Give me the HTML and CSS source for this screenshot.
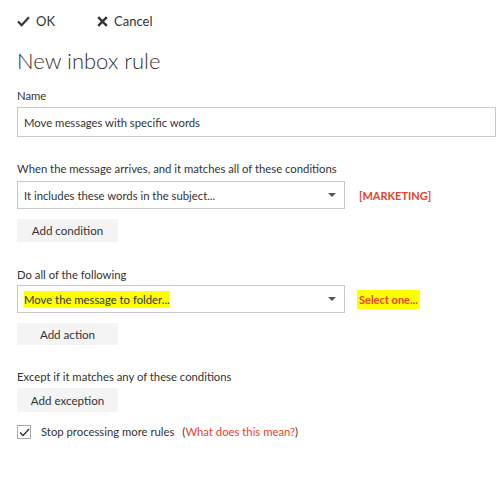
FILE: index.html
```html
<!DOCTYPE html>
<html>
<head>
<meta charset="utf-8">
<link rel="stylesheet" href="styles.css">
</head>
<body>
<div class="page">
  <div class="toolbar">
    <span class="tool">
      <svg class="ico" width="13" height="11" viewBox="0 0 13 11"><path d="M1 5.5 L4.6 9.2 L12 1.2" fill="none" stroke="#333" stroke-width="2.2"/></svg>
      <span>OK</span>
    </span>
    <span class="tool">
      <svg class="ico" width="11" height="11" viewBox="0 0 11 11"><path d="M1.2 1.2 L9.8 9.8 M9.8 1.2 L1.2 9.8" fill="none" stroke="#333" stroke-width="2.4"/></svg>
      <span>Cancel</span>
    </span>
  </div>
  <h1 class="title">New inbox rule</h1>

  <div class="label label-name">Name</div>
  <div class="input">Move messages with specific words</div>

  <div class="label label-when">When the message arrives, and it matches all of these conditions</div>
  <div class="select-row">
    <div class="select"><span>It includes these words in the subject...</span><span class="arrow"></span></div>
    <span class="note red">[MARKETING]</span>
  </div>
  <button class="btn btn-cond">Add condition</button>

  <div class="label label-do">Do all of the following</div>
  <div class="select-row row-do">
    <div class="select"><span class="hl">Move the message to folder...</span><span class="arrow"></span></div>
    <span class="note red hl hl-note">Select one...</span>
  </div>
  <button class="btn btn-action">Add action</button>

  <div class="label label-except">Except if it matches any of these conditions</div>
  <button class="btn btn-exc">Add exception</button>

  <div class="check-row">
    <span class="checkbox"><svg width="11" height="9" viewBox="0 0 11 9"><path d="M1 4.5 L4 7.5 L10 1" fill="none" stroke="#333" stroke-width="1.4"/></svg></span>
    <span class="check-text">Stop processing more rules</span>
    <span class="help">(<span class="red">What does this mean?</span>)</span>
  </div>
</div>
</body>
</html>
```

FILE: styles.css
```css
html, body {
  margin: 0;
  padding: 0;
  background: #fff;
}
body {
  font-family: "Lato", "Open Sans", sans-serif;
  font-size: 11.3px;
  color: #333;
}
.page {
  padding: 12px 4px 0 17px;
}
.toolbar {
  display: flex;
  align-items: center;
  height: 18px;
  font-size: 13px;
}
.tool {
  display: inline-flex;
  align-items: center;
  gap: 6px;
}
.tool + .tool {
  margin-left: 42px;
}
.ico {
  display: block;
}
.title {
  margin: 16px 0 0 0;
  font-size: 22px;
  line-height: 30px;
  font-weight: 300;
  color: #333;
}
.label {
  line-height: 16px;
}
.label-name { margin-top: 12px; }
.label-when { margin-top: 24px; }
.label-do { margin-top: 25px; }
.label-except { margin-top: 24px; }
.input {
  box-sizing: border-box;
  margin-top: 3px;
  height: 30px;
  width: 479px;
  border: 1px solid #c8c8c8;
  padding: 0 6px;
  display: flex;
  align-items: center;
}
.select-row {
  display: flex;
  align-items: center;
  margin-top: 4px;
  gap: 14px;
}
.row-do {
  margin-top: 2px;
  gap: 12px;
}
.select {
  box-sizing: border-box;
  width: 328px;
  height: 28px;
  border: 1px solid #c8c8c8;
  padding: 0 8px 0 6px;
  display: flex;
  align-items: center;
  justify-content: space-between;
}
.arrow {
  width: 0;
  height: 0;
  border-left: 4px solid transparent;
  border-right: 4px solid transparent;
  border-top: 4px solid #555;
}
.red {
  color: #e8412c;
}
.note {
  font-weight: bold;
  font-size: 11px;
}
.hl {
  background: #ffff00;
  padding: 2px 0;
}
.hl-note {
  padding: 3px 2px;
}
.btn {
  display: block;
  box-sizing: border-box;
  width: 101px;
  border: none;
  background: #f4f4f4;
  font-family: inherit;
  font-size: 11.6px;
  color: #333;
  padding: 0;
}
.btn-cond { margin-top: 10px; height: 23px; }
.btn-action { margin-top: 10px; height: 22px; }
.btn-exc { margin-top: 3px; height: 24px; }
.check-row {
  display: flex;
  align-items: center;
  margin-top: 12px;
  line-height: 16px;
}
.checkbox {
  box-sizing: border-box;
  width: 14px;
  height: 14px;
  border: 1px solid #aaa;
  display: inline-flex;
  align-items: center;
  justify-content: center;
  margin-right: 10px;
}
.checkbox svg { display: block; }
.help {
  margin-left: 8px;
}
```
